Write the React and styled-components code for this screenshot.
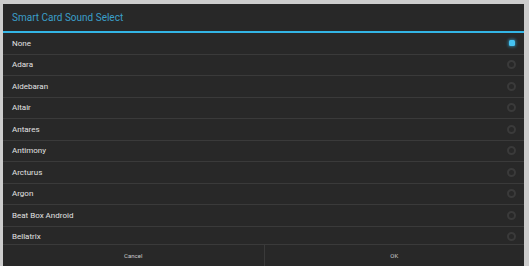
import React, { useState } from "react";
import styled, { createGlobalStyle } from "styled-components";

const GlobalStyle = createGlobalStyle`
  html, body {
    margin: 0;
    padding: 0;
    background: #cdcdcd;
    overflow: hidden;
  }
  body {
    font-family: Roboto, "Liberation Sans", sans-serif;
  }
`;

const sounds = [
  "None",
  "Adara",
  "Aldebaran",
  "Altair",
  "Antares",
  "Antimony",
  "Arcturus",
  "Argon",
  "Beat Box Android",
  "Bellatrix",
];

const App = () => {
  const [selected, setSelected] = useState("None");

  return (
    <>
      <GlobalStyle />
      <Dialog>
        <Title>Smart Card Sound Select</Title>
        <List>
          {sounds.map((name) => (
            <Row key={name} onClick={() => setSelected(name)}>
              <span>{name}</span>
              <Radio isChecked={name === selected} />
            </Row>
          ))}
        </List>
        <ButtonBar>
          <Button>Cancel</Button>
          <Button>OK</Button>
        </ButtonBar>
      </Dialog>
    </>
  );
};

export default App;

const Dialog = styled.div`
  display: flex;
  flex-direction: column;
  margin: 4px 5px 0 3px;
  height: 262px;
  background: #282828;
`;

const Title = styled.div`
  display: flex;
  align-items: center;
  height: 27px;
  padding-left: 9px;
  font-size: 10px;
  color: #3a9fca;
  border-bottom: 2px solid #33b5e5;
`;

const List = styled.div`
  flex: 1;
  overflow: hidden;
`;

const Row = styled.div`
  box-sizing: border-box;
  display: flex;
  align-items: center;
  justify-content: space-between;
  height: 21.5px;
  padding: 0 8px 0 9px;
  border-bottom: 1px solid #3a3a3a;
  font-size: 8px;
  color: #e2e2e2;
  cursor: pointer;
`;

const Radio = styled.div`
  box-sizing: border-box;
  width: ${(props) => (props.isChecked ? "6px" : "9px")};
  height: ${(props) => (props.isChecked ? "6px" : "9px")};
  margin-right: ${(props) => (props.isChecked ? "1.5px" : "0")};
  border-radius: ${(props) => (props.isChecked ? "1.5px" : "50%")};
  border: ${(props) => (props.isChecked ? "none" : "2px solid #3a3a3a")};
  background: ${(props) => (props.isChecked ? "#45c3f2" : "transparent")};
  box-shadow: ${(props) =>
    props.isChecked ? "0 0 3px 1px rgba(51,181,229,0.55)" : "none"};
`;

const ButtonBar = styled.div`
  display: grid;
  grid-template-columns: 1fr 1fr;
  height: 21px;
  border-top: 1px solid #3a3a3a;
`;

const Button = styled.div`
  display: flex;
  align-items: center;
  justify-content: center;
  font-size: 6px;
  color: #c8c8c8;
  & + & {
    border-left: 1px solid #3a3a3a;
  }
`;
